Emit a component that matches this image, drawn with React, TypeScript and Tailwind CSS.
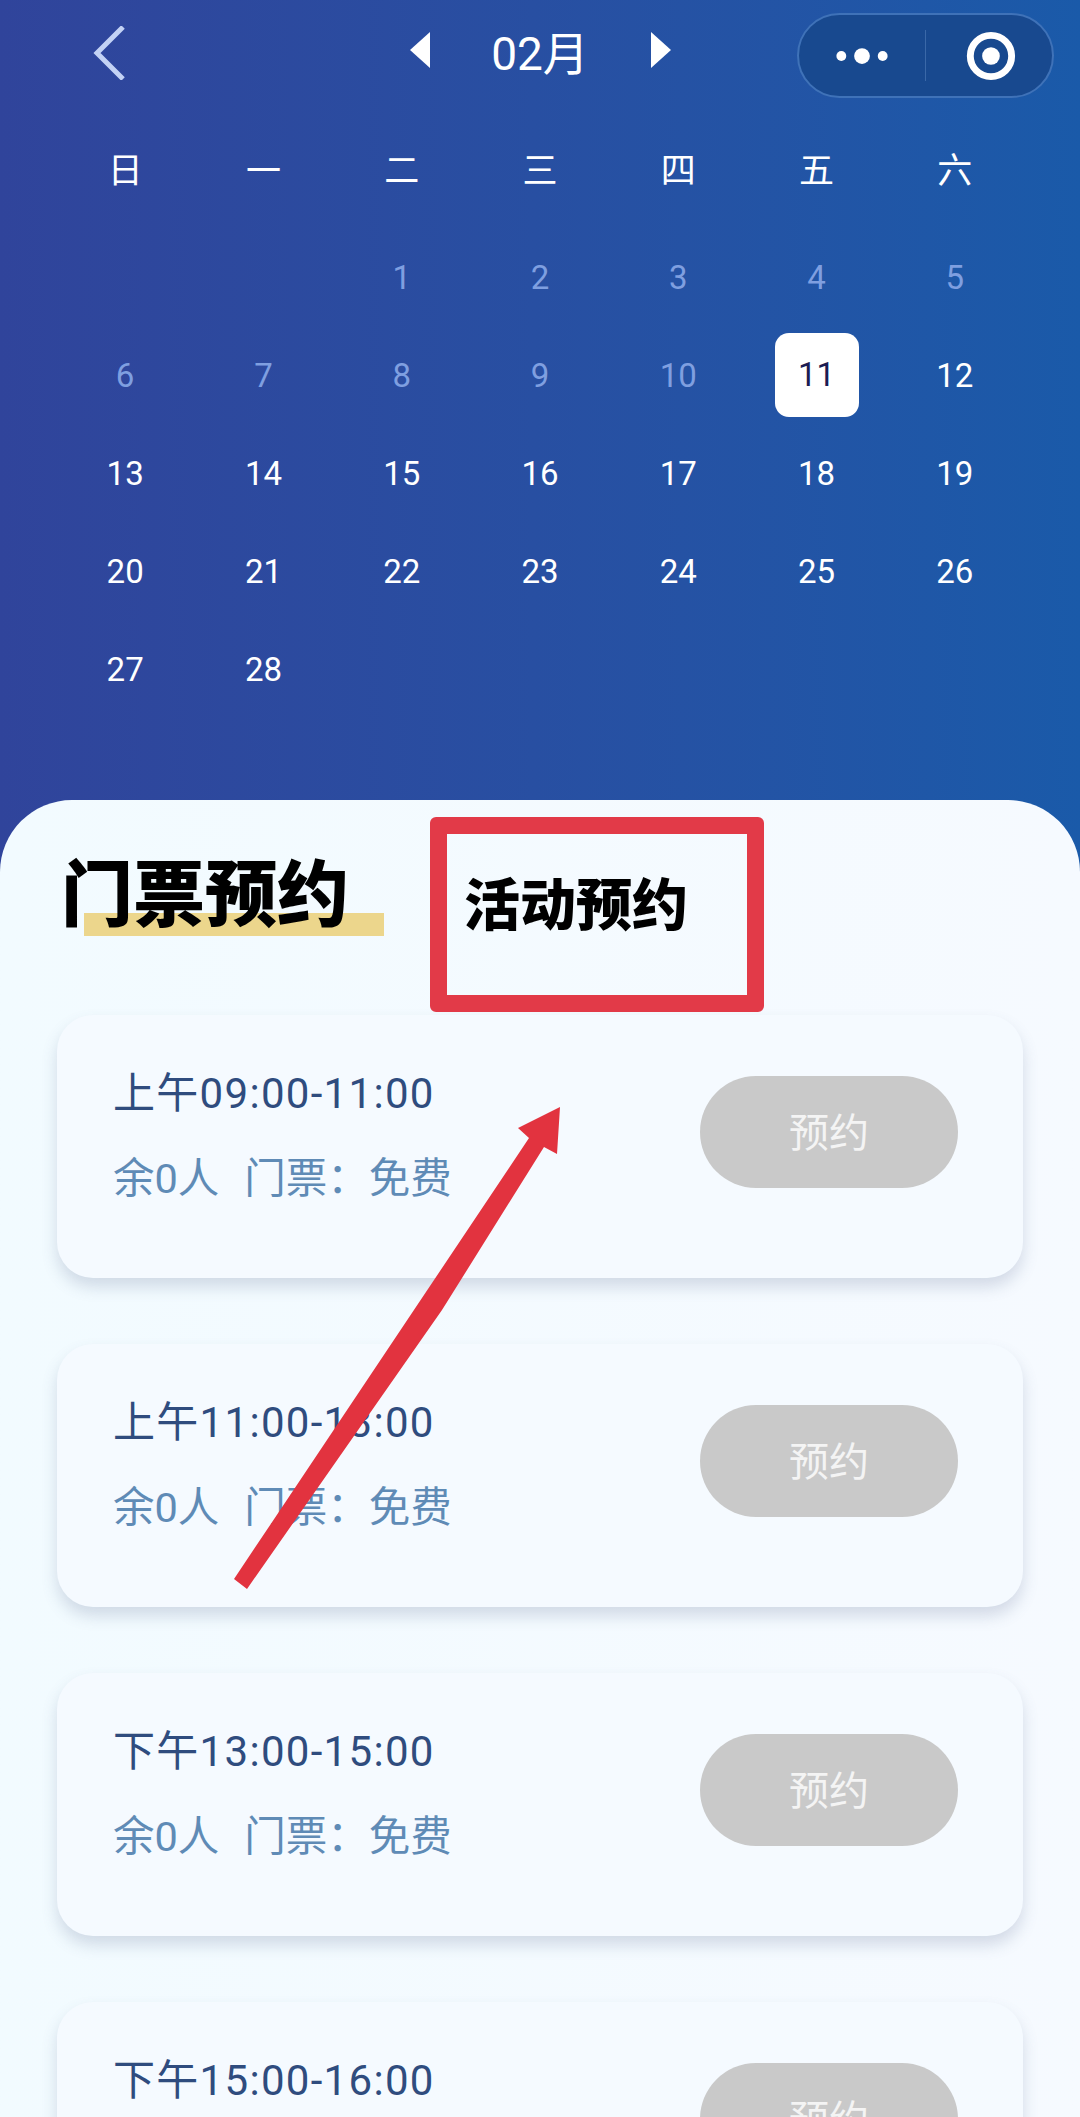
const font = "font-['Roboto','Noto_Sans_CJK_SC',sans-serif]"

const weekDays = ["日", "一", "二", "三", "四", "五", "六"]

// 2月 starts on a Tuesday, days before the 11th are greyed out
const days: (number | null)[] = [null, null]
for (let i = 1; i <= 28; i++) days.push(i)

const slots = ["上午09:00-11:00", "上午11:00-13:00", "下午13:00-15:00", "下午15:00-16:00"]

function DayCell({ day }: { day: number | null }) {
    if (day === null) return <div className="h-[98px]" />

    if (day === 11) {
        return (
            <div className="h-[98px] flex items-center justify-center">
                <div className="w-[84px] h-[84px] rounded-[14px] bg-white flex items-center justify-center text-[33px] text-[#1c1c52]">
                    {day}
                </div>
            </div>
        )
    }

    return (
        <div className={`h-[98px] pt-[2px] flex items-center justify-center text-[33px] ${day < 11 ? "text-[#7f9fe0]" : "text-white"}`}>
            {day}
        </div>
    )
}

function SlotCard({ time }: { time: string }) {
    return (
        <div className="h-[263px] mb-[66px] shrink-0 rounded-[36px] bg-[#f5faff] shadow-[0_9px_16px_rgba(70,90,130,0.2)] flex justify-between pl-[56px] pr-[65px]">
            <div className="pt-[51px]">
                <div className="h-[56px] leading-[56px] text-[42px] tracking-[1.3px] text-[#2f4c7e] whitespace-nowrap">{time}</div>
                <div className="h-[56px] leading-[56px] mt-[29px] text-[41.5px] text-[#5f8bb6] whitespace-nowrap">
                    余0人<span className="ml-[25px]">门票：免费</span>
                </div>
            </div>
            <div className="mt-[61px] w-[258px] h-[112px] pt-[3px] rounded-full bg-[#c9c9c9] flex items-center justify-center text-[40px] text-[#f4f4f4]">
                预约
            </div>
        </div>
    )
}

export default function App() {
    return (
        <div className={`relative w-[1080px] h-[2117px] overflow-hidden bg-gradient-to-r from-[#30449b] to-[#1a5aa9] ${font}`}>
            {/* top bar */}
            <div className="grid grid-cols-[1fr_auto_1fr] items-center pt-[13px] h-[98px] px-[26px]">
                <svg className="ml-[67px] -mt-[6px]" width="33" height="54" viewBox="0 0 33 54" fill="none">
                    <path d="M30 1 L4 27 L30 53" stroke="#c3d2f5" strokeWidth="5" />
                </svg>
                <div className="flex items-center text-white">
                    <svg className="-mt-[12px]" width="20" height="36" viewBox="0 0 20 36"><path d="M20 0 V36 L0 18 Z" fill="#ffffff" /></svg>
                    <div className="w-[221px] text-center text-[46px] leading-none -mt-[4px]">02月</div>
                    <svg className="-mt-[12px]" width="20" height="36" viewBox="0 0 20 36"><path d="M0 0 V36 L20 18 Z" fill="#ffffff" /></svg>
                </div>
                <div className="flex justify-end">
                    <div className="w-[257px] h-[85px] rounded-full bg-[#18498f] border-2 border-[#3f72b8] flex items-center">
                        <svg width="128" height="60" viewBox="0 0 128 60">
                            <circle cx="43" cy="30" r="5" fill="#ffffff" />
                            <circle cx="64" cy="30" r="8" fill="#ffffff" />
                            <circle cx="85" cy="30" r="5" fill="#ffffff" />
                        </svg>
                        <div className="w-px h-[51px] bg-[#3a68a8]" />
                        <svg width="128" height="60" viewBox="0 0 128 60">
                            <circle cx="66" cy="30" r="21" fill="none" stroke="#ffffff" strokeWidth="7" />
                            <circle cx="66" cy="30" r="9" fill="#ffffff" />
                        </svg>
                    </div>
                </div>
            </div>

            {/* calendar */}
            <div className="px-[56px] mt-[23px]">
                <div className="grid grid-cols-7 h-[98px] pt-[5px] mb-[9px]">
                    {weekDays.map((d) => (
                        <div key={d} className="flex items-center justify-center text-[35px] text-white">{d}</div>
                    ))}
                </div>
                <div className="grid grid-cols-7">
                    {days.map((d, i) => (
                        <DayCell key={i} day={d} />
                    ))}
                </div>
            </div>

            {/* booking panel */}
            <div className="mt-[82px] h-[1317px] rounded-t-[72px] bg-gradient-to-r from-[#f2fbff] to-[#f6faff] pt-[50px]">
                <div className="flex h-[84px] pl-[61px]">
                    <div className="relative w-[288px] h-[84px]">
                        <div className="absolute left-[23px] top-[63px] w-[300px] h-[23px] bg-[#ecd68c]" />
                        <div className="relative top-[4px] text-[72px] leading-[84px] font-black text-black whitespace-nowrap">门票预约</div>
                    </div>
                    <div className="ml-[115px] mt-[23px] text-[56px] leading-[66px] font-black text-black whitespace-nowrap">活动预约</div>
                </div>

                <div className="mt-[81px] mx-[57px] flex flex-col">
                    {slots.map((s) => (
                        <SlotCard key={s} time={s} />
                    ))}
                </div>
            </div>

            {/* red annotation drawn over the screenshot */}
            <div className="absolute left-[430px] top-[817px] w-[334px] h-[195px] rounded-[6px] border-[17px] border-[#e23a48]" />
            <svg className="absolute left-0 top-0" width="1080" height="2117" viewBox="0 0 1080 2117">
                <path d="M234 1579 L529 1138 L518 1128 L560 1107 L557 1154 L544 1147 L442 1310 L247 1589 Z" fill="#e2333f" />
            </svg>
        </div>
    )
}
